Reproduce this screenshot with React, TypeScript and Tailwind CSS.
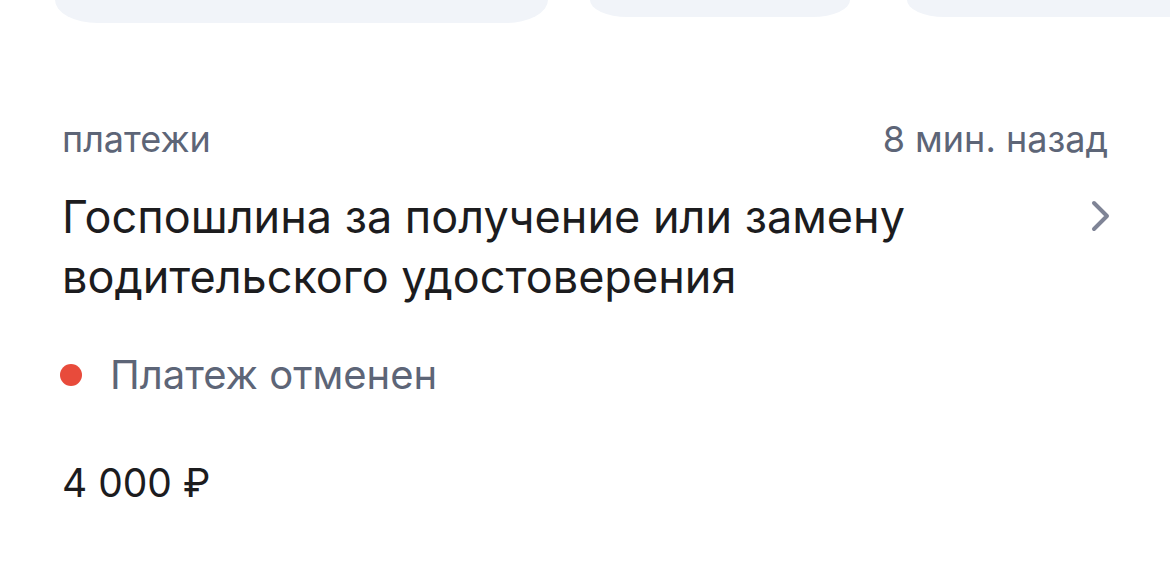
import React from 'react';

const cards = [
  { w: 'w-[493px]', h: 'h-[23px]', ml: 'ml-[55px]', r: 'rounded-b-[48px_26px]' },
  { w: 'w-[260px]', h: 'h-[17px]', ml: 'ml-[42px]', r: 'rounded-b-[44px_20px]' },
  { w: 'w-[320px]', h: 'h-[17px]', ml: 'ml-[57px]', r: 'rounded-bl-[44px_20px]' },
];

function Chevron() {
  return (
    <svg width="22" height="32" viewBox="0 0 22 32" fill="none">
      <path d="M4 3l13 13L4 29" stroke="#7f8496" strokeWidth="4" strokeLinecap="round" strokeLinejoin="round" />
    </svg>
  );
}

export default function App() {
  return (
    <div className="w-[1170px] h-[567px] bg-white overflow-hidden font-['Inter',sans-serif]">
      {/* обрезанные карточки карусели сверху */}
      <div className="flex items-start overflow-hidden">
        {cards.map((c, i) => (
          <div key={i} className={`shrink-0 bg-[#f1f4f9] ${c.w} ${c.h} ${c.ml} ${c.r}`} />
        ))}
      </div>

      <div className="px-[62px] pt-[96px]">
        <div className="flex items-center justify-between text-[36px] leading-[40px] text-[#5d6577]">
          <span>платежи</span>
          <span>8 мин. назад</span>
        </div>

        <div className="mt-[28px] flex items-start justify-between">
          <div className="text-[45px] leading-[60px] text-[#1c1c1e]">
            Госпошлина за получение или замену
            <br />
            водительского удостоверения
          </div>
          <div className="mt-[13px] mr-[-4px]">
            <Chevron />
          </div>
        </div>

        <div className="mt-[43px] flex items-center">
          <span className="w-[22px] h-[22px] rounded-full bg-[#e84b3b] ml-[-2px]" />
          <span className="ml-[28px] text-[40px] leading-[50px] text-[#5d6577]">Платеж отменен</span>
        </div>

        <div className="mt-[58px] text-[39px] leading-[50px] text-[#1c1c1e]">4 000 ₽</div>
      </div>
    </div>
  );
}
